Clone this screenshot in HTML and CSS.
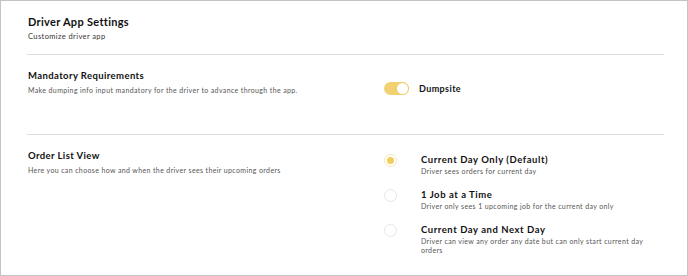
FILE: index.html
```html
<!DOCTYPE html>
<html>
<head>
<meta charset="utf-8">
<link rel="stylesheet" href="styles.css">
</head>
<body>
<div class="frame">
  <header class="head">
    <h1 class="title">Driver App Settings</h1>
    <p class="sub">Customize driver app</p>
  </header>
  <section class="section s1">
    <div class="info">
      <h2 class="stitle">Mandatory Requirements</h2>
      <p class="desc">Make dumping info input mandatory for the driver to advance through the app.</p>
    </div>
    <div class="control">
      <div class="toggle-row">
        <span class="toggle"><span class="knob"></span></span>
        <span class="tlabel">Dumpsite</span>
      </div>
    </div>
  </section>
  <section class="section s2">
    <div class="info">
      <h2 class="stitle">Order List View</h2>
      <p class="desc">Here you can choose how and when the driver sees their upcoming orders</p>
    </div>
    <div class="control options">
      <div class="opt">
        <span class="radio on"><span class="dot"></span></span>
        <div class="otext">
          <div class="otitle">Current Day Only (Default)</div>
          <div class="odesc">Driver sees orders for current day</div>
        </div>
      </div>
      <div class="opt">
        <span class="radio"></span>
        <div class="otext">
          <div class="otitle">1 Job at a Time</div>
          <div class="odesc">Driver only sees 1 upcoming job for the current day only</div>
        </div>
      </div>
      <div class="opt">
        <span class="radio"></span>
        <div class="otext">
          <div class="otitle">Current Day and Next Day</div>
          <div class="odesc">Driver can view any order any date but can only start current day orders</div>
        </div>
      </div>
    </div>
  </section>
</div>
</body>
</html>
```
FILE: styles.css
```css
* { box-sizing: border-box; margin: 0; padding: 0; }
html, body { background: #fff; }
body { font-family: "Lato", "Open Sans", sans-serif; color: #111; }
.frame {
  width: 688px;
  height: 276px;
  border: 1px solid #c4c4c4;
  padding: 0 23px 0 26px;
  overflow: hidden;
}
.head {
  padding: 14px 0 0 1px;
  height: 54px;
  border-bottom: 1px solid #dcdcdc;
}
.title { font-size: 11px; font-weight: 700; line-height: 14px; letter-spacing: 0.3px; color: #111; }
.sub { font-size: 7.5px; line-height: 10px; margin-top: 3px; color: #333; letter-spacing: 0.4px; }
.section {
  display: grid;
  grid-template-columns: 356px 1fr;
  padding-left: 1px;
  border-bottom: 1px solid #dcdcdc;
}
.s1 { height: 80px; padding-top: 14px; }
.s2 { border-bottom: none; padding-top: 14px; }
.stitle { font-size: 9.5px; font-weight: 700; line-height: 13px; letter-spacing: 0.4px; color: #111; }
.desc { font-size: 7px; line-height: 10px; margin-top: 3px; color: #555; letter-spacing: 0.37px; }
.toggle-row { display: flex; align-items: center; gap: 10px; margin-top: 13px; }
.toggle {
  width: 25px; height: 13px; border-radius: 7px; background: #f2d173;
  display: flex; justify-content: flex-end; align-items: center; padding: 0 1px;
}
.knob { width: 11px; height: 11px; border-radius: 50%; background: #fff; box-shadow: 0 0 0 1px #f0cd66; }
.tlabel { font-size: 9px; font-weight: 700; letter-spacing: 0.4px; color: #111; }
.options { display: flex; flex-direction: column; gap: 13px; padding-top: 5px; }
.opt { display: flex; align-items: flex-start; gap: 24px; }
.radio {
  flex: none; width: 13px; height: 13px; border-radius: 50%;
  border: 1px solid #e6e6e6; margin-top: 0px;
  display: flex; align-items: center; justify-content: center;
}
.radio.on { border-color: #f7e6b3; }
.dot { width: 7px; height: 7px; border-radius: 50%; background: #f2cc5f; }
.otitle { font-size: 9.5px; font-weight: 700; line-height: 12px; letter-spacing: 0.55px; color: #111; }
.odesc { font-size: 7px; line-height: 9px; margin-top: 1px; color: #555; letter-spacing: 0.37px; max-width: 230px; }
```
